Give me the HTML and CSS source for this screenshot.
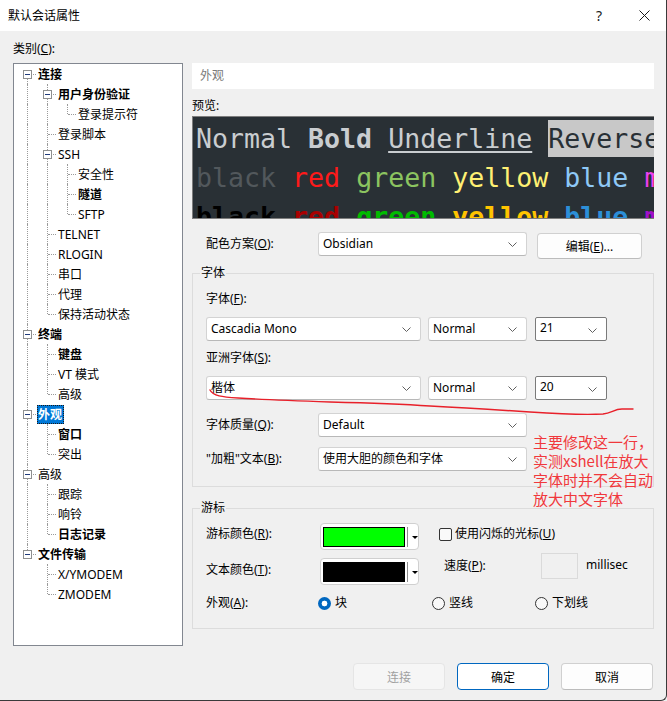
FILE: index.html
```html
<!DOCTYPE html>
<html lang="zh-CN">
<head>
<meta charset="utf-8">
<title>默认会话属性</title>
<link rel="stylesheet" href="styles.css">
</head>
<body>
<div class="window">
  <div class="titlebar">
    <span class="title">默认会话属性</span>
    <span class="help">?</span>
    <span class="close"><svg width="11" height="11" viewBox="0 0 11 11"><path d="M0.5 0.5 L10.5 10.5 M10.5 0.5 L0.5 10.5" stroke="#1a1a1a" stroke-width="1" fill="none"/></svg></span>
  </div>
  <div class="client">
    <div class="cat-label">类别(<u>C</u>):</div>
    <div class="content">
      <div class="tree">
        <div class="row"><i class="g n f"><b class="x"></b></i><span class="lbl bold">连接</span></div>
        <div class="row"><i class="g p"></i><i class="g n"><b class="x"></b></i><span class="lbl bold">用户身份验证</span></div>
        <div class="row"><i class="g p"></i><i class="g p"></i><i class="g n e"></i><span class="lbl">登录提示符</span></div>
        <div class="row"><i class="g p"></i><i class="g n"></i><span class="lbl">登录脚本</span></div>
        <div class="row"><i class="g p"></i><i class="g n"><b class="x"></b></i><span class="lbl">SSH</span></div>
        <div class="row"><i class="g p"></i><i class="g p"></i><i class="g n"></i><span class="lbl">安全性</span></div>
        <div class="row"><i class="g p"></i><i class="g p"></i><i class="g n"></i><span class="lbl bold">隧道</span></div>
        <div class="row"><i class="g p"></i><i class="g p"></i><i class="g n e"></i><span class="lbl">SFTP</span></div>
        <div class="row"><i class="g p"></i><i class="g n"></i><span class="lbl">TELNET</span></div>
        <div class="row"><i class="g p"></i><i class="g n"></i><span class="lbl">RLOGIN</span></div>
        <div class="row"><i class="g p"></i><i class="g n"></i><span class="lbl">串口</span></div>
        <div class="row"><i class="g p"></i><i class="g n"></i><span class="lbl">代理</span></div>
        <div class="row"><i class="g p"></i><i class="g n e"></i><span class="lbl">保持活动状态</span></div>
        <div class="row"><i class="g n"><b class="x"></b></i><span class="lbl bold">终端</span></div>
        <div class="row"><i class="g p"></i><i class="g n"></i><span class="lbl bold">键盘</span></div>
        <div class="row"><i class="g p"></i><i class="g n"></i><span class="lbl">VT 模式</span></div>
        <div class="row"><i class="g p"></i><i class="g n e"></i><span class="lbl">高级</span></div>
        <div class="row"><i class="g n"><b class="x"></b></i><span class="lbl bold sel">外观</span></div>
        <div class="row"><i class="g p"></i><i class="g n"></i><span class="lbl bold">窗口</span></div>
        <div class="row"><i class="g p"></i><i class="g n e"></i><span class="lbl">突出</span></div>
        <div class="row"><i class="g n"><b class="x"></b></i><span class="lbl">高级</span></div>
        <div class="row"><i class="g p"></i><i class="g n"></i><span class="lbl">跟踪</span></div>
        <div class="row"><i class="g p"></i><i class="g n"></i><span class="lbl">响铃</span></div>
        <div class="row"><i class="g p"></i><i class="g n e"></i><span class="lbl bold">日志记录</span></div>
        <div class="row"><i class="g n e"><b class="x"></b></i><span class="lbl bold">文件传输</span></div>
        <div class="row"><i class="g"></i><i class="g n"></i><span class="lbl">X/YMODEM</span></div>
        <div class="row"><i class="g"></i><i class="g n e"></i><span class="lbl">ZMODEM</span></div>
      </div>

      <div class="panel">
        <div class="page-title">外观</div>
        <div class="preview-label">预览:</div>
        <div class="preview">
          <div class="pl"><span class="fg">Normal </span><b class="fg">Bold</b><span class="fg"> </span><span class="fg ul">Underline</span><span class="fg"> </span><span class="rev">Reverse  </span></div>
          <div class="pl"><span class="c0">black</span> <span class="c1">red</span> <span class="c2">green</span> <span class="c3">yellow</span> <span class="c4">blue</span> <span class="c5">magenta</span></div>
          <div class="pl bold"><span class="b0">black</span> <span class="b1">red</span> <span class="b2">green</span> <span class="b3">yellow</span> <span class="b4">blue</span> <span class="b5">magenta</span></div>
        </div>

        <div class="scheme-row">
          <span class="lab">配色方案(<u>O</u>):</span>
          <div class="combo w-scheme"><span class="val">Obsidian</span><svg class="chev" width="9" height="5" viewBox="0 0 9 5"><path d="M0.5 0.5 L4.5 4.5 L8.5 0.5" fill="none" stroke="#606060"/></svg></div>
          <button class="btn edit">编辑(<u>E</u>)...</button>
        </div>

        <div class="group font-group">
          <div class="legend">字体</div>
          <div class="glabel first">字体(<u>F</u>):</div>
          <div class="combos">
            <div class="combo w-face"><span class="val">Cascadia Mono</span><svg class="chev" width="9" height="5" viewBox="0 0 9 5"><path d="M0.5 0.5 L4.5 4.5 L8.5 0.5" fill="none" stroke="#606060"/></svg></div>
            <div class="combo w-style"><span class="val">Normal</span><svg class="chev" width="9" height="5" viewBox="0 0 9 5"><path d="M0.5 0.5 L4.5 4.5 L8.5 0.5" fill="none" stroke="#606060"/></svg></div>
            <div class="combo w-size editable"><span class="val">21</span><svg class="chev" width="9" height="5" viewBox="0 0 9 5"><path d="M0.5 0.5 L4.5 4.5 L8.5 0.5" fill="none" stroke="#606060"/></svg></div>
          </div>
          <div class="glabel">亚洲字体(<u>S</u>):</div>
          <div class="combos">
            <div class="combo w-face"><span class="val">楷体</span><svg class="chev" width="9" height="5" viewBox="0 0 9 5"><path d="M0.5 0.5 L4.5 4.5 L8.5 0.5" fill="none" stroke="#606060"/></svg></div>
            <div class="combo w-style"><span class="val">Normal</span><svg class="chev" width="9" height="5" viewBox="0 0 9 5"><path d="M0.5 0.5 L4.5 4.5 L8.5 0.5" fill="none" stroke="#606060"/></svg></div>
            <div class="combo w-size editable"><span class="val">20</span><svg class="chev" width="9" height="5" viewBox="0 0 9 5"><path d="M0.5 0.5 L4.5 4.5 L8.5 0.5" fill="none" stroke="#606060"/></svg></div>
          </div>
          <div class="frow quality">
            <span class="lab">字体质量(<u>Q</u>):</span>
            <div class="combo w-scheme"><span class="val">Default</span><svg class="chev" width="9" height="5" viewBox="0 0 9 5"><path d="M0.5 0.5 L4.5 4.5 L8.5 0.5" fill="none" stroke="#606060"/></svg></div>
          </div>
          <div class="frow boldtext">
            <span class="lab">"加粗"文本(<u>B</u>):</span>
            <div class="combo w-scheme"><span class="val">使用大胆的颜色和字体</span><svg class="chev" width="9" height="5" viewBox="0 0 9 5"><path d="M0.5 0.5 L4.5 4.5 L8.5 0.5" fill="none" stroke="#606060"/></svg></div>
          </div>
        </div>

        <div class="group cursor-group">
          <div class="legend">游标</div>
          <div class="crow r1">
            <span class="lab">游标颜色(<u>R</u>):</span>
            <div class="colorbtn"><span class="swatch green"></span><span class="sep"></span><span class="drop"></span></div>
            <span class="check"><span class="box"></span>使用闪烁的光标(<u>U</u>)</span>
          </div>
          <div class="crow r2">
            <span class="lab">文本颜色(<u>T</u>):</span>
            <div class="colorbtn"><span class="swatch black"></span><span class="sep"></span><span class="drop"></span></div>
            <span class="speed-lab">速度(<u>P</u>):</span>
            <span class="speed"></span>
            <span class="ms">millisec</span>
          </div>
          <div class="crow r3">
            <span class="lab">外观(<u>A</u>):</span>
            <span class="opt w1"><span class="radio on"></span>块</span>
            <span class="opt w2"><span class="radio"></span>竖线</span>
            <span class="opt"><span class="radio"></span>下划线</span>
          </div>
        </div>
      </div>
    </div>

    <div class="buttons">
      <button class="btn dlg disabled">连接</button>
      <button class="btn dlg primary">确定</button>
      <button class="btn dlg">取消</button>
    </div>
  </div>

  <div class="annotation">主要修改这一行，<br>实测xshell在放大<br>字体时并不会自动<br>放大中文字体</div>
  <svg class="scribble" width="667" height="701" viewBox="0 0 667 701"><path d="M210 390 C213 396 222 397 238 398 C270 400 300 401 330 402 C370 403 400 404 430 406 C470 408 500 410 530 412 C560 414 585 415 603 414 C612 413 614 409 622 409 L633 409" fill="none" stroke="#e8202a" stroke-width="1.4" stroke-linecap="round"/></svg>
</div>
</body>
</html>
```

FILE: styles.css
```css
html, body {
  margin: 0;
  padding: 0;
}

body {
  width: 667px;
  height: 701px;
  overflow: hidden;
  font-family: "Noto Sans", "Noto Sans CJK SC", sans-serif;
  font-size: 12px;
  line-height: 16px;
  color: #000;
  background: #f0f0f0;
}

.window {
  position: relative;
  width: 667px;
  height: 701px;
  box-sizing: border-box;
  background: #f0f0f0;
  border-right: 1px solid #3a3a3a;
  border-bottom: 1px solid #3a3a3a;
  border-bottom-right-radius: 6px;
  overflow: hidden;
}

/* title bar */
.titlebar {
  height: 31px;
  background: #fff;
  display: flex;
  align-items: center;
  padding-left: 8px;
}
.title { flex: 1; }
.help {
  width: 46px;
  text-align: center;
  font-size: 14px;
  color: #1a1a1a;
}
.close {
  width: 44px;
  display: flex;
  justify-content: center;
  align-items: center;
}

.client {
  padding: 10px 12px 0 13px;
}

.cat-label { line-height: 16px; }

.content {
  display: flex;
  margin-top: 6px;
  gap: 9px;
  align-items: flex-start;
}

/* tree */
.tree {
  width: 170px;
  height: 583px;
  box-sizing: border-box;
  border: 1px solid #828790;
  background: #fff;
  padding-left: 3px;
  flex: none;
}
.row {
  display: flex;
  align-items: center;
  height: 20px;
}
.g {
  position: relative;
  flex: none;
  width: 20px;
  height: 20px;
}
.g.p::before {
  content: "";
  position: absolute;
  left: 10px;
  top: 0;
  height: 20px;
  border-left: 1px dotted #9a9a9a;
}
.g.n::before {
  content: "";
  position: absolute;
  left: 10px;
  top: 0;
  height: 20px;
  border-left: 1px dotted #9a9a9a;
}
.g.n.e::before { height: 10px; }
.g.n.f::before { top: 10px; height: 10px; }
.g.n::after {
  content: "";
  position: absolute;
  left: 11px;
  top: 10px;
  width: 8px;
  border-top: 1px dotted #9a9a9a;
}
.x {
  position: absolute;
  left: 6px;
  top: 6px;
  width: 9px;
  height: 9px;
  box-sizing: border-box;
  border: 1px solid #8e8f8f;
  background: #fff;
  z-index: 1;
}
.x::before {
  content: "";
  position: absolute;
  left: 1px;
  top: 3px;
  width: 5px;
  height: 1px;
  background: #1f3a7a;
}
.lbl {
  border: 1px solid transparent;
  padding: 0 1px 0 0;
  line-height: 17px;
  white-space: nowrap;
}
.lbl.bold { font-weight: bold; }
.lbl.sel {
  background: #0078d7;
  color: #fff;
  border: 1px dotted #1a1a1a;
}

/* right panel */
.panel {
  width: 462px;
  flex: none;
}
.page-title {
  height: 26px;
  line-height: 26px;
  background: #fff;
  color: #7a7a7a;
  padding-left: 8px;
}
.preview-label {
  margin-top: 9px;
}
.preview {
  margin-top: 2px;
  height: 103px;
  box-sizing: border-box;
  border: 1px solid #7d7d7d;
  border-right: none;
  background: #293035;
  padding: 2px 0 0 3px;
  overflow: hidden;
  font-family: "DejaVu Sans Mono", monospace;
  font-size: 26.6px;
  line-height: 39px;
}
.pl {
  height: 39px;
  white-space: pre;
  overflow: hidden;
}
.pl.bold { font-weight: bold; }
.fg { color: #c9cdd0; }
.ul {
  text-decoration: underline;
  text-decoration-thickness: 2px;
  text-underline-offset: 3px;
}
.rev {
  display: inline-block;
  background: #c8c8c8;
  color: #293035;
  line-height: 37px;
  vertical-align: top;
  margin-top: 1px;
}
.c0 { color: #52585c; }
.c1 { color: #ff1a1a; }
.c2 { color: #8cc460; }
.c3 { color: #fff073; }
.c4 { color: #8ec8f6; }
.c5 { color: #f040f0; }
.b0 { color: #000; }
.b1 { color: #a80000; }
.b2 { color: #00bb00; }
.b3 { color: #ffc400; }
.b4 { color: #2c8fd8; }
.b5 { color: #a010c8; }

.lab {
  width: 112px;
  flex: none;
  white-space: nowrap;
}

.scheme-row {
  display: flex;
  align-items: flex-start;
  margin-top: 13px;
  padding-left: 14px;
}
.scheme-row .lab { margin-top: 4px; }

.combo {
  display: flex;
  align-items: center;
  height: 24px;
  box-sizing: border-box;
  border: 1px solid #d3d3d3;
  border-bottom-color: #b8b8b8;
  border-radius: 3px;
  background: #fff;
  padding-left: 4px;
  flex: none;
}
.combo .val { flex: 1; white-space: nowrap; }
.combo .chev { margin-right: 9px; flex: none; }
.combo.editable {
  border-color: #7a7a7a;
  border-radius: 2px;
  align-items: flex-start;
  padding-top: 2px;
}
.combo.editable .chev { margin-top: 8px; }
.w-scheme { width: 209px; }
.w-face { width: 215px; }
.w-style { width: 99px; margin-left: 7px; }
.w-size { width: 72px; margin-left: 8px; }

.btn {
  font-family: "Noto Sans", "Noto Sans CJK SC", sans-serif;
  font-size: 12px;
  color: #000;
  background: #fdfdfd;
  border: 1px solid #d0d0d0;
  border-bottom-color: #bcbcbc;
  border-radius: 4px;
  padding: 0;
}
.btn.edit {
  width: 105px;
  height: 26px;
  margin-left: 10px;
  margin-top: 1px;
}

/* groups */
.group {
  border: 1px solid #dcdcdc;
  padding: 0 13px 15px 13px;
}
.legend {
  margin: -9px 0 0 -6px;
  padding: 0 1px;
  width: max-content;
  background: #f0f0f0;
  line-height: 16px;
}
.font-group { margin-top: 14px; }
.glabel { margin-top: 9px; }
.glabel.first { margin-top: 10px; }
.combos {
  display: flex;
  margin-top: 10px;
}
.frow {
  display: flex;
  align-items: center;
}
.frow.quality { margin-top: 13px; }
.frow.boldtext { margin-top: 10px; }

.cursor-group {
  margin-top: 21px;
  padding-bottom: 17px;
}
.crow {
  display: flex;
  align-items: flex-start;
}
.crow.r1 { margin-top: 7px; }
.crow.r1 .lab { margin-top: 3px; }
.crow.r2 { margin-top: 3px; }
.crow.r2 .lab { margin-top: 9px; }
.crow.r2 .colorbtn { margin-top: 5px; }
.crow.r3 { margin-top: 10px; align-items: center; }

.colorbtn {
  display: flex;
  align-items: center;
  width: 99px;
  height: 27px;
  box-sizing: border-box;
  margin-left: 2px;
  border: 1px solid #d0d0d0;
  border-radius: 4px;
  background: #fff;
  padding-left: 2px;
  flex: none;
}
.swatch {
  width: 82px;
  height: 20px;
  box-sizing: border-box;
  border: 1px solid #000;
}
.swatch.green { background: #00ff00; }
.swatch.black { background: #000; }
.sep {
  width: 1px;
  height: 20px;
  background: #8c8c8c;
  margin-left: 2px;
}
.drop {
  width: 0;
  height: 0;
  margin-left: 4px;
  margin-top: 1px;
  border-left: 3px solid transparent;
  border-right: 3px solid transparent;
  border-top: 3px solid #000;
}

.check {
  display: flex;
  align-items: center;
  margin-left: 20px;
  margin-top: 3px;
  white-space: nowrap;
}
.box {
  width: 13px;
  height: 13px;
  box-sizing: border-box;
  border: 1px solid #333;
  border-radius: 2px;
  background: #f9f9f9;
  margin-right: 3px;
}

.speed-lab {
  width: 97px;
  margin-left: 25px;
  margin-top: 5px;
  flex: none;
}
.speed {
  width: 37px;
  height: 26px;
  box-sizing: border-box;
  border: 1px solid #dadada;
  flex: none;
}
.ms {
  margin-left: 8px;
  margin-top: 4px;
}

.opt {
  display: flex;
  align-items: center;
  white-space: nowrap;
}
.opt.w1 { width: 114px; }
.opt.w2 { width: 103px; }
.radio {
  width: 13px;
  height: 13px;
  box-sizing: border-box;
  border: 1px solid #333;
  border-radius: 50%;
  background: #f9f9f9;
  margin-right: 4px;
}
.radio.on {
  border: none;
  background: radial-gradient(circle, #fff 0 2.6px, #0067c0 3.2px);
}

/* bottom buttons */
.buttons {
  display: flex;
  justify-content: flex-end;
  gap: 12px;
  margin-top: 17px;
  margin-right: 1px;
}
.btn.dlg {
  width: 92px;
  height: 27px;
}
.btn.disabled {
  color: #a0a0a0;
  background: #f6f6f6;
  border-color: #e5e5e5;
}
.btn.primary {
  background: #fff;
  border-color: #0067c0;
}

/* red annotation overlay */
.annotation {
  position: absolute;
  left: 533px;
  top: 432px;
  font-family: "Noto Sans CJK SC", sans-serif;
  font-size: 15px;
  line-height: 19px;
  color: #f0383c;
  white-space: nowrap;
  z-index: 3;
}
.scribble {
  position: absolute;
  left: 0;
  top: 0;
  pointer-events: none;
  z-index: 3;
}
```
